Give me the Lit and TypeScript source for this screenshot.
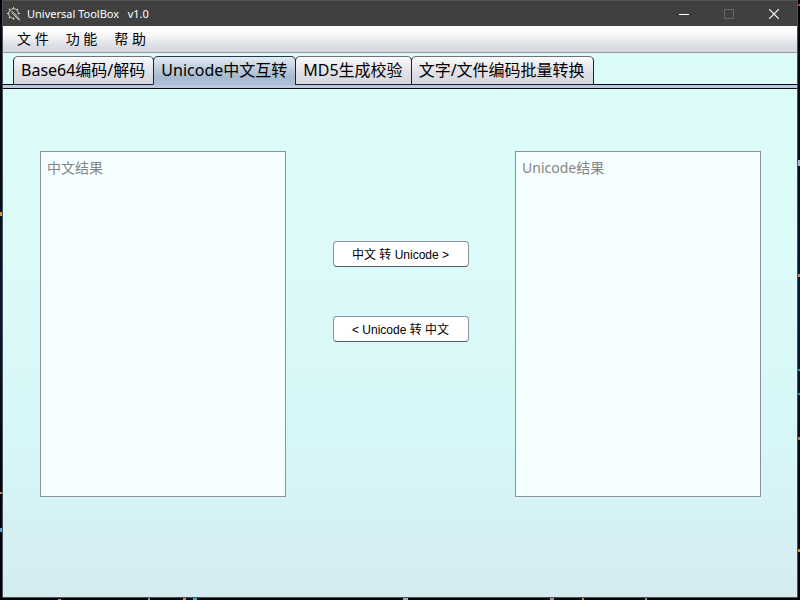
import { LitElement, html, css, svg } from "lit";
import { customElement, state } from "lit/decorators.js";
import { classMap } from "lit/directives/class-map.js";

const TABS = ["Base64编码/解码", "Unicode中文互转", "MD5生成校验", "文字/文件编码批量转换"];
const MENUS = ["文 件", "功 能", "帮 助"];

@customElement("app-root")
export class AppRoot extends LitElement {
  @state() private active = 1;
  @state() private chinese = "";
  @state() private unicode = "";

  static styles = css`
    :host {
      display: block;
      box-sizing: border-box;
      min-height: 100vh;
      padding: 0 2px 2px;
      background:
        linear-gradient(#d9963d, #d9963d) 0 212px / 2px 4px no-repeat,
        linear-gradient(#c98468, #c98468) 0 492px / 2px 2px no-repeat,
        linear-gradient(#5fa0cf, #5fa0cf) 0 528px / 2px 4px no-repeat,
        linear-gradient(#b04a3c, #b04a3c) 100% 4px / 2px 2px no-repeat,
        linear-gradient(#b4b4d0, #b4b4d0) 100% 160px / 2px 6px no-repeat,
        linear-gradient(#c97f5a, #c97f5a) 100% 274px / 2px 3px no-repeat,
        linear-gradient(#1c9db0, #1c9db0) 100% 369px / 2px 2px no-repeat,
        linear-gradient(#1c9db0, #1c9db0) 100% 393px / 2px 2px no-repeat,
        linear-gradient(#c5783f, #c5783f) 100% 437px / 2px 3px no-repeat,
        linear-gradient(#d98b3d, #d98b3d) 100% 549px / 2px 3px no-repeat,
        linear-gradient(#d98b3d, #d98b3d) 58px 100% / 3px 1px no-repeat,
        linear-gradient(#6f9fbf, #6f9fbf) 148px 100% / 2px 2px no-repeat,
        linear-gradient(#d98b3d, #d98b3d) 183px 100% / 3px 2px no-repeat,
        linear-gradient(#39a8d8, #39a8d8) 193px 100% / 4px 2px no-repeat,
        linear-gradient(#a5a5c8, #a5a5c8) 403px 100% / 5px 2px no-repeat,
        linear-gradient(#c08585, #c08585) 550px 100% / 4px 2px no-repeat,
        linear-gradient(#d9901f, #d9901f) 582px 100% / 2px 2px no-repeat,
        linear-gradient(#b08478, #b08478) 645px 100% / 2px 2px no-repeat,
        linear-gradient(#02030d, #071733 55%, #02030d 80%);
      font-family: "Noto Sans", "Noto Sans CJK SC", sans-serif;
      color: #000;
    }
    * {
      box-sizing: border-box;
    }
    button {
      margin: 0;
      padding: 0;
      border: 0;
      background: none;
      color: inherit;
      font: inherit;
      white-space: nowrap;
    }
    .window {
      display: flex;
      flex-direction: column;
      min-height: calc(100vh - 2px);
      border: 1px solid #4b5052;
      border-top: 0;
      background: linear-gradient(#dbfbf9, #dcfbf9 40%, #d7f6f7 75%, #d4ecf0);
    }
    .titlebar {
      display: flex;
      align-items: center;
      height: 26px;
      padding: 0 1px 0 4px;
      border-top: 1px solid #525252;
      background: #404040;
      color: #fff;
    }
    .logo {
      width: 14px;
      height: 14px;
    }
    .title {
      flex: 1;
      margin: 0 0 0 6px;
      font: 11px/16px "Noto Sans", sans-serif;
      white-space: pre;
    }
    .control {
      display: flex;
      align-items: center;
      justify-content: center;
      width: 45px;
      height: 25px;
    }
    .menubar {
      display: flex;
      gap: 17px;
      height: 27px;
      padding-left: 14px;
      border-bottom: 1px solid #9897a2;
      background: linear-gradient(#fff, #f7f7f7 35%, #dcdee5 75%, #d6d8e1);
      font-size: 14px;
      line-height: 26px;
    }
    .tabs {
      display: flex;
      height: 36px;
      padding: 3px 0 0 10px;
      background: linear-gradient(#070716, #070716) 0 31px / 100% 1px no-repeat,
        linear-gradient(#b9c9df, #b9c9df) 0 32px / 100% 3px no-repeat,
        linear-gradient(#070716, #070716) 0 35px / 100% 1px no-repeat;
    }
    .tab {
      height: 29px;
      margin-right: -1px;
      padding: 0 8px 0 7px;
      border: 1px solid #20202e;
      border-top-color: #70707c;
      border-radius: 5px 5px 0 0;
      background: linear-gradient(#fafafa, #e3e3e9 50%, #d5d6df);
      font-size: 16px;
      line-height: 27px;
    }
    .tab.active {
      border-top-color: #26384a;
      border-bottom-color: #a8bed4;
      background: linear-gradient(#e3edf4, #b7c9da 50%, #a4bad0 75%, #adc1d6);
    }
    .panel {
      flex: 1;
      display: grid;
      grid-template-columns: 246fr 229fr 246fr;
      padding: 62px 36px 100px 37px;
    }
    .text {
      display: block;
      width: 100%;
      height: 100%;
      min-height: 200px;
      margin: 0;
      padding: 6px;
      border: 1px solid #8b929e;
      border-radius: 0;
      outline: 0;
      resize: none;
      background: #f6ffff;
      color: #222;
      font: 14px/20px "Noto Sans", "Noto Sans CJK SC", sans-serif;
    }
    .text::placeholder {
      color: #858585;
      opacity: 1;
    }
    .actions {
      display: flex;
      flex-direction: column;
      align-items: center;
      gap: 49px;
      padding-top: 90px;
    }
    .convert {
      width: 136px;
      height: 26px;
      padding-top: 2px;
      border: 1px solid #8c929c;
      border-bottom-color: #555865;
      border-radius: 4px;
      background: #fff;
      font: 12px/22px "Liberation Sans", "Noto Sans CJK SC", sans-serif;
    }
  `;

  private toUnicode() {
    this.unicode = Array.from({ length: this.chinese.length }, (_, i) =>
      "\\u" + this.chinese.charCodeAt(i).toString(16).padStart(4, "0")).join("");
  }

  private toChinese() {
    this.chinese = this.unicode.replace(/\\u([0-9a-fA-F]{4})/g, (_, h) =>
      String.fromCharCode(parseInt(h, 16)));
  }

  private logo() {
    return html`<svg class="logo" viewBox="0 0 14 14" fill="none" stroke="#d5d5d5" aria-hidden="true">
      <path d="M11.2 7.5A4.8 4.8 0 1 0 7.5 11.2" />
      ${[0, 45, 90, 180, 225, 270, 315].map((a) =>
        svg`<path d="M6.5 1.8V0" transform="rotate(${a} 6.5 6.5)" />`)}
      <path d="M4.2 4.6L6.2 5.2L13 12.8M5 5.8L12.2 13.4" />
    </svg>`;
  }

  render() {
    return html`<div class="window">
      <header class="titlebar">
        ${this.logo()}
        <h1 class="title">Universal ToolBox   v1.0</h1>
        <button class="control" aria-label="Minimize"><svg width="10" height="10" stroke="#fff"><path d="M0 5.5H10" /></svg></button>
        <button class="control" aria-label="Maximize" disabled><svg width="10" height="10" fill="none" stroke="#696969"><path d="M.5.5H9.5V9.5H.5Z" /></svg></button>
        <button class="control" aria-label="Close"><svg width="10" height="10" stroke="#fff" stroke-width="1.2"><path d="M0 0L10 10M10 0L0 10" /></svg></button>
      </header>
      <nav class="menubar">${MENUS.map((m) => html`<button>${m}</button>`)}</nav>
      <div class="tabs" role="tablist">
        ${TABS.map((t, i) => html`<button role="tab" aria-selected=${i === this.active}
          class=${classMap({ tab: true, active: i === this.active })}
          @click=${() => (this.active = i)}>${t}</button>`)}
      </div>
      <main class="panel">
        <textarea class="text" aria-label="中文结果" placeholder="中文结果" .value=${this.chinese}
          @input=${(e: Event) => (this.chinese = (e.target as HTMLTextAreaElement).value)}></textarea>
        <div class="actions">
          <button class="convert" @click=${this.toUnicode}>中文 转 Unicode &gt;</button>
          <button class="convert" @click=${this.toChinese}>&lt; Unicode 转 中文</button>
        </div>
        <textarea class="text" aria-label="Unicode结果" placeholder="Unicode结果" .value=${this.unicode}
          @input=${(e: Event) => (this.unicode = (e.target as HTMLTextAreaElement).value)}></textarea>
      </main>
    </div>`;
  }
}
